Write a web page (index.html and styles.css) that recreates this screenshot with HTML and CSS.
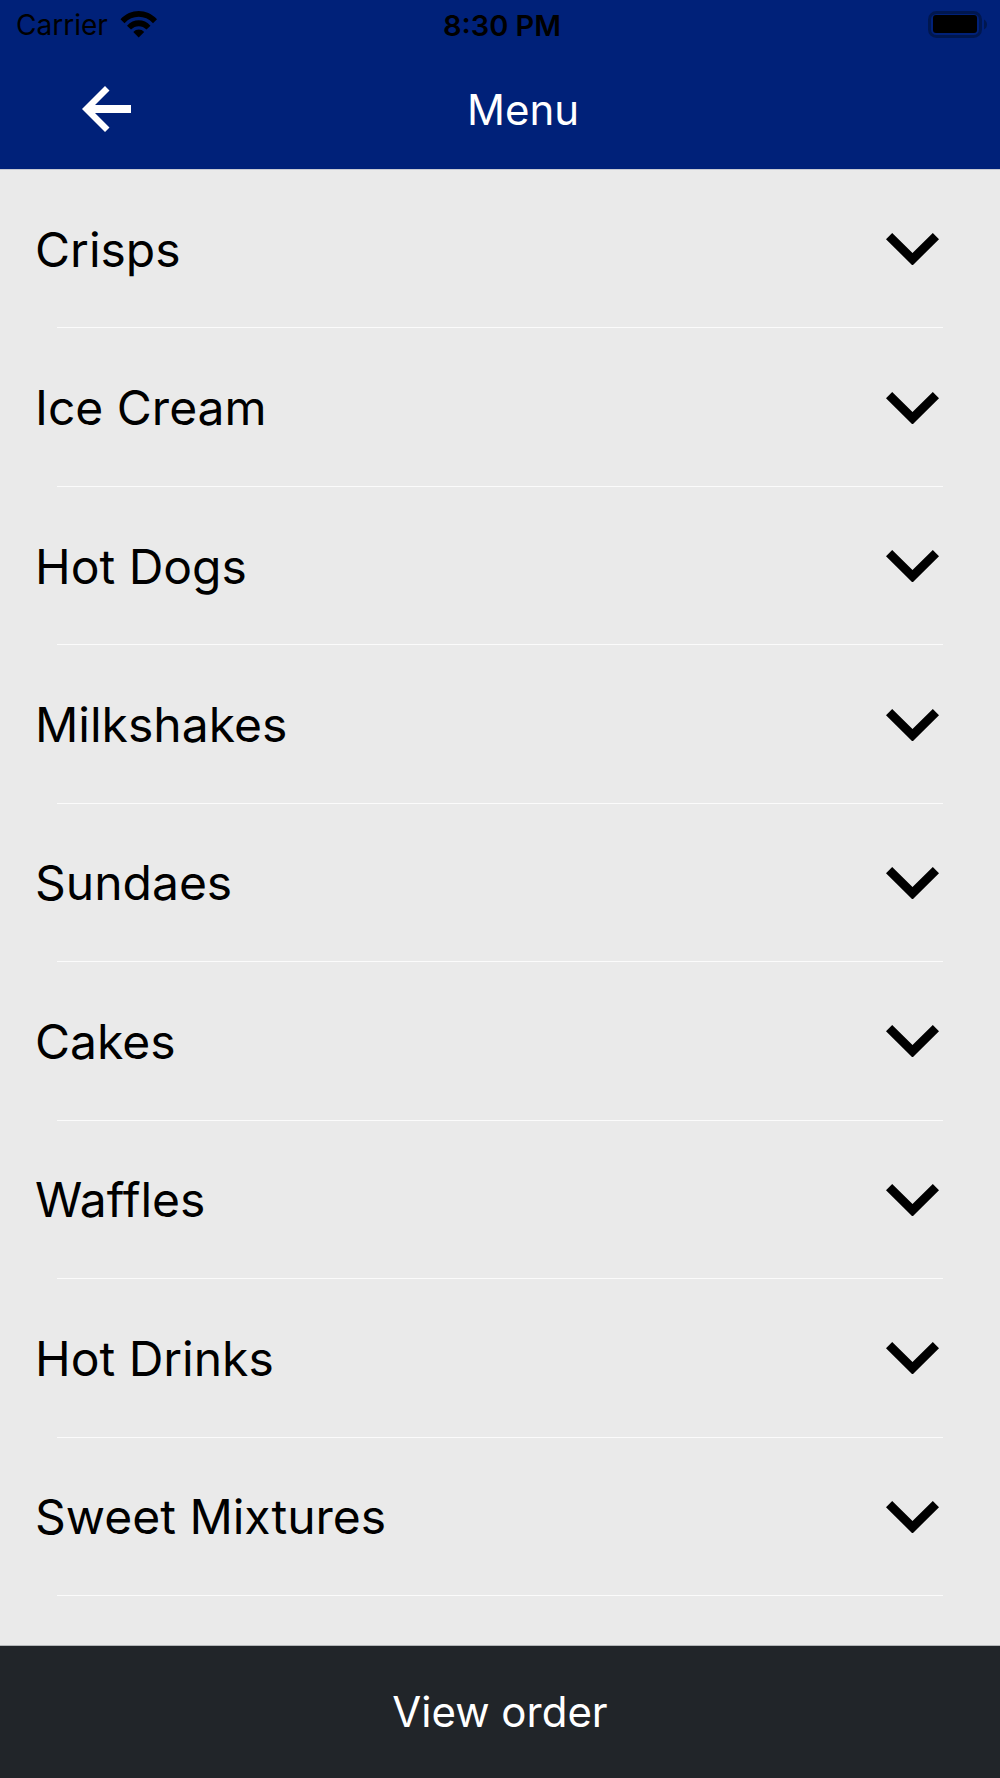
FILE: index.html
```html
<!DOCTYPE html>
<html lang="en">
<head>
    <meta charset="UTF-8">
    <meta name="viewport" content="width=device-width, initial-scale=1.0">
    <title>Menu</title>
    <link rel="stylesheet" href="styles.css">
</head>
<body>

<!-- Shared chevron icon -->
<svg class="sprite" aria-hidden="true">
    <symbol id="chevron" viewBox="0 0 53 32">
        <path d="M0 6.2L6.2 0L26.5 20L46.8 0L53 6.2L26.5 32.5Z"/>
    </symbol>
</svg>

<header class="header">
    <div class="status-bar">
        <div class="carrier">
            <span>Carrier</span>
            <svg class="wifi" viewBox="0 0 38 28" aria-hidden="true">
                <path d="M0.5 8.3C10.5 -2.7 27 -2.7 37 8.3L33 12.2C25 3.7 12.5 3.7 4.5 12.2Z"/>
                <path d="M7 14.7C13.5 7.5 24 7.5 30.5 14.7L26.5 18.6C22.2 14.1 15.3 14.1 11 18.6Z"/>
                <path d="M13.3 21C16.3 17.7 21.2 17.7 24.2 21L18.7 26.5Z"/>
            </svg>
        </div>
        <span class="time">8:30 PM</span>
        <svg class="battery" viewBox="0 0 60 28" aria-hidden="true">
            <rect class="battery-shell" x="1.5" y="1.5" width="51" height="24" rx="7"/>
            <rect x="5" y="4" width="44" height="18" rx="3"/>
            <path class="battery-cap" d="M56 8.5C60 10.5 60 16.5 56 18.5Z"/>
        </svg>
    </div>
    <div class="nav">
        <button class="back" type="button" aria-label="Back">
            <svg class="arrow" viewBox="0 0 49 46" aria-hidden="true">
                <path d="M0 23L23 0L27.5 4.5L13 19H49V27H13L27.5 41.5L23 46Z"/>
            </svg>
        </button>
        <h1 class="title">Menu</h1>
    </div>
</header>

<main class="content">
    <ul class="menu-list">
        <li class="menu-item">
            <button class="category" type="button">Crisps <svg class="chevron" aria-hidden="true"><use href="#chevron"/></svg></button>
        </li>
        <li class="menu-item">
            <button class="category" type="button">Ice Cream <svg class="chevron" aria-hidden="true"><use href="#chevron"/></svg></button>
        </li>
        <li class="menu-item">
            <button class="category" type="button">Hot Dogs <svg class="chevron" aria-hidden="true"><use href="#chevron"/></svg></button>
        </li>
        <li class="menu-item">
            <button class="category" type="button">Milkshakes <svg class="chevron" aria-hidden="true"><use href="#chevron"/></svg></button>
        </li>
        <li class="menu-item">
            <button class="category" type="button">Sundaes <svg class="chevron" aria-hidden="true"><use href="#chevron"/></svg></button>
        </li>
        <li class="menu-item">
            <button class="category" type="button">Cakes <svg class="chevron" aria-hidden="true"><use href="#chevron"/></svg></button>
        </li>
        <li class="menu-item">
            <button class="category" type="button">Waffles <svg class="chevron" aria-hidden="true"><use href="#chevron"/></svg></button>
        </li>
        <li class="menu-item">
            <button class="category" type="button">Hot Drinks <svg class="chevron" aria-hidden="true"><use href="#chevron"/></svg></button>
        </li>
        <li class="menu-item">
            <button class="category" type="button">Sweet Mixtures <svg class="chevron" aria-hidden="true"><use href="#chevron"/></svg></button>
        </li>
    </ul>
</main>

<button class="view-order" type="button">View order</button>

</body>
</html>
```
FILE: styles.css
```css
/* Page fills the window: header, list, order bar */
body {
    font-family: Inter, Roboto, sans-serif;
    margin: 0;
    min-height: 100vh;
    display: flex;
    flex-direction: column;
    background-color: #eaeaea;
    color: #000;
}

button {
    border: none;
    background: none;
    font-family: inherit;
    color: inherit;
    cursor: pointer;
}

svg {
    display: block;
    flex-shrink: 0;
}

.sprite {
    display: none;
}

/* Header */
.header {
    background-color: #002179;
    border-bottom: 1px solid #c6c9d3;
}

.status-bar {
    display: grid;
    grid-template-columns: 1fr auto 1fr;
    align-items: center;
    height: 50px;
    padding: 0 12px 0 16px;
    font-size: 28px;
}

.carrier {
    display: flex;
    align-items: center;
    gap: 12px;
}

.wifi {
    width: 38px;
    height: 28px;
}

.time {
    font-size: 29px;
    font-weight: 600;
}

.battery {
    width: 60px;
    height: 28px;
    justify-self: end;
}

.battery-shell {
    fill: none;
    stroke: #00174f;
    stroke-width: 3;
}

.battery-cap {
    fill: #00174f;
}

.nav {
    display: grid;
    grid-template-columns: 213px 1fr 167px;
    align-items: center;
    height: 118px;
    padding-bottom: 1px;
    color: #fff;
}

.back {
    justify-self: center;
    padding: 0;
}

.arrow {
    width: 49px;
    height: 46px;
    fill: #fff;
}

.title {
    margin: 0;
    font-size: 42px;
    font-weight: 400;
    text-align: center;
}

/* Category list */
.content {
    flex: 1;
    display: flex;
    padding-bottom: 49px;
}

.menu-list {
    flex: 1;
    display: grid;
    grid-auto-rows: 1fr;
    list-style: none;
    margin: 0;
    padding: 0;
}

.menu-item {
    display: flex;
    flex-direction: column;
}

/* Inset divider under each category */
.menu-item::after {
    content: "";
    height: 1px;
    margin: 0 57px;
    background-color: #fbfbfb;
}

.category {
    flex: 1;
    display: flex;
    justify-content: space-between;
    align-items: center;
    padding: 1px 61px 0 35px;
    font-size: 48px;
}

.chevron {
    width: 53px;
    height: 32px;
}

/* Order bar */
.view-order {
    height: 133px;
    padding: 0 0 2px;
    border-top: 1px solid #b4b7b9;
    background-color: #212529;
    color: #fff;
    font-size: 42px;
}
```
